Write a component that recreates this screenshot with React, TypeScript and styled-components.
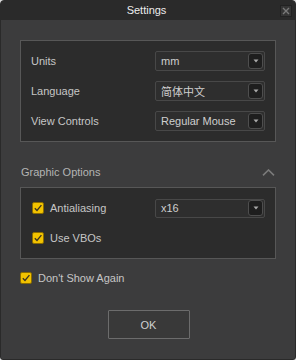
import { FC } from "react";
import styled, { createGlobalStyle } from "styled-components";

const GlobalStyle = createGlobalStyle`
  html, body {
    margin: 0;
    padding: 0;
    background: #dcdcdc;
  }
  body {
    font-family: "Liberation Sans", Arial, "Noto Sans CJK SC", sans-serif;
    font-size: 11px;
  }
`;

const Window = styled.div`
  width: 296px;
  height: 360px;
  box-sizing: border-box;
  display: flex;
  flex-direction: column;
  background: #3c3c3d;
  border: 1px solid #2a2a2a;
  border-radius: 4px 4px 3px 3px;
  overflow: hidden;
`;

const TitleBar = styled.div`
  height: 19px;
  flex: none;
  display: grid;
  grid-template-columns: 1fr auto 1fr;
  align-items: center;
  background: #2a2a2a;
  color: #ececec;
  font-size: 11px;
  padding: 0 3px 0 0;
`;

const Title = styled.div`
  grid-column: 2;
  line-height: 19px;
`;

const CloseButton = styled.div`
  grid-column: 3;
  justify-self: end;
  width: 12px;
  height: 12px;
  box-sizing: border-box;
  display: flex;
  align-items: center;
  justify-content: center;
  background: #353535;
  border: 1px solid #222;
  margin-top: 1px;
`;

const Body = styled.div`
  flex: 1;
  display: flex;
  flex-direction: column;
  padding: 20px 19px 0 19px;
`;

const GroupBox = styled.div`
  display: flex;
  flex-direction: column;
  gap: 10px;
  padding: 10px 10px;
  background: #2c2c2c;
  border: 1px solid #575757;
`;

const Row = styled.div`
  height: 20px;
  display: flex;
  align-items: center;
  justify-content: space-between;
`;

const Label = styled.span`
  color: #c6c6c6;
`;

const CheckLabel = styled.label<{ $indent?: number }>`
  display: flex;
  align-items: center;
  gap: 6px;
  color: #c6c6c6;
  margin-left: ${(p) => p.$indent ?? 0}px;
`;

const Select = styled.div<{ $h?: number }>`
  width: 110px;
  height: ${(p) => p.$h ?? 20}px;
  box-sizing: border-box;
  display: flex;
  align-items: center;
  justify-content: space-between;
  padding: 0 1px 0 5px;
  background: #2e2e2e;
  border: 1px solid #484848;
  border-radius: 2px;
  color: #cfcfcf;
  font-size: 11px;
`;

const DropButton = styled.div`
  width: 15px;
  height: 16px;
  box-sizing: border-box;
  display: flex;
  align-items: center;
  justify-content: center;
  background: #1e1e1e;
  border: 1px solid #4e4e4e;
  border-radius: 3px;
`;

const Box = styled.span`
  width: 12px;
  height: 12px;
  box-sizing: border-box;
  display: flex;
  align-items: center;
  justify-content: center;
  background: #f2c200;
  border: 1px solid #8a6c00;
  border-radius: 2px;
`;

const SectionHeader = styled.div`
  height: 16px;
  margin: 22px 0 7px 0;
  padding: 0 1px 0 1px;
  display: flex;
  align-items: center;
  justify-content: space-between;
  color: #b4b4b4;
  font-size: 11px;
`;

const Footer = styled.div`
  display: flex;
  justify-content: center;
  margin-top: 22px;
`;

const OkButton = styled.button`
  width: 82px;
  height: 29px;
  background: #393939;
  border: 1px solid #6c6c6c;
  border-radius: 1px;
  color: #d0d0d0;
  font-family: inherit;
  font-size: 11px;
  margin-left: 1px;
`;

const Arrow: FC = () => (
  <svg width="6" height="4" viewBox="0 0 6 4">
    <path d="M0.5 0.5 L5.5 0.5 L3 3.5 Z" fill="#a8a8a8" />
  </svg>
);

const Check: FC = () => (
  <Box>
    <svg width="10" height="10" viewBox="0 0 10 10">
      <path d="M1.8 5.2 L4 7.5 L8.4 2.2" fill="none" stroke="#3a3220" strokeWidth="1.3" />
    </svg>
  </Box>
);

const Dropdown: FC<{ value: string; h?: number }> = ({ value, h }) => (
  <Select $h={h}>
    <span>{value}</span>
    <DropButton>
      <Arrow />
    </DropButton>
  </Select>
);

const App: FC = () => {
  const general = [
    { label: "Units", value: "mm" },
    { label: "Language", value: "简体中文" },
    { label: "View Controls", value: "Regular Mouse" },
  ];

  return (
    <>
      <GlobalStyle />
      <Window>
        <TitleBar>
          <Title>Settings</Title>
          <CloseButton>
            <svg width="8" height="8" viewBox="0 0 8 8">
              <path d="M1 1 L7 7 M7 1 L1 7" stroke="#7a7a7a" strokeWidth="1.4" />
            </svg>
          </CloseButton>
        </TitleBar>
        <Body>
          <GroupBox>
            {general.map((g) => (
              <Row key={g.label}>
                <Label>{g.label}</Label>
                <Dropdown value={g.value} />
              </Row>
            ))}
          </GroupBox>

          <SectionHeader>
            <span>Graphic Options</span>
            <svg width="13" height="7" viewBox="0 0 13 7">
              <path d="M1 6.3 L6.5 1 L12 6.3" fill="none" stroke="#7a7a7a" strokeWidth="1.6" />
            </svg>
          </SectionHeader>

          <GroupBox>
            <Row>
              <CheckLabel $indent={1}>
                <Check />
                Antialiasing
              </CheckLabel>
              <Dropdown value="x16" h={19} />
            </Row>
            <Row>
              <CheckLabel $indent={1}>
                <Check />
                Use VBOs
              </CheckLabel>
            </Row>
          </GroupBox>

          <Row style={{ marginTop: 9 }}>
            <CheckLabel>
              <Check />
              Don't Show Again
            </CheckLabel>
          </Row>

          <Footer>
            <OkButton>OK</OkButton>
          </Footer>
        </Body>
      </Window>
    </>
  );
};

export default App;
